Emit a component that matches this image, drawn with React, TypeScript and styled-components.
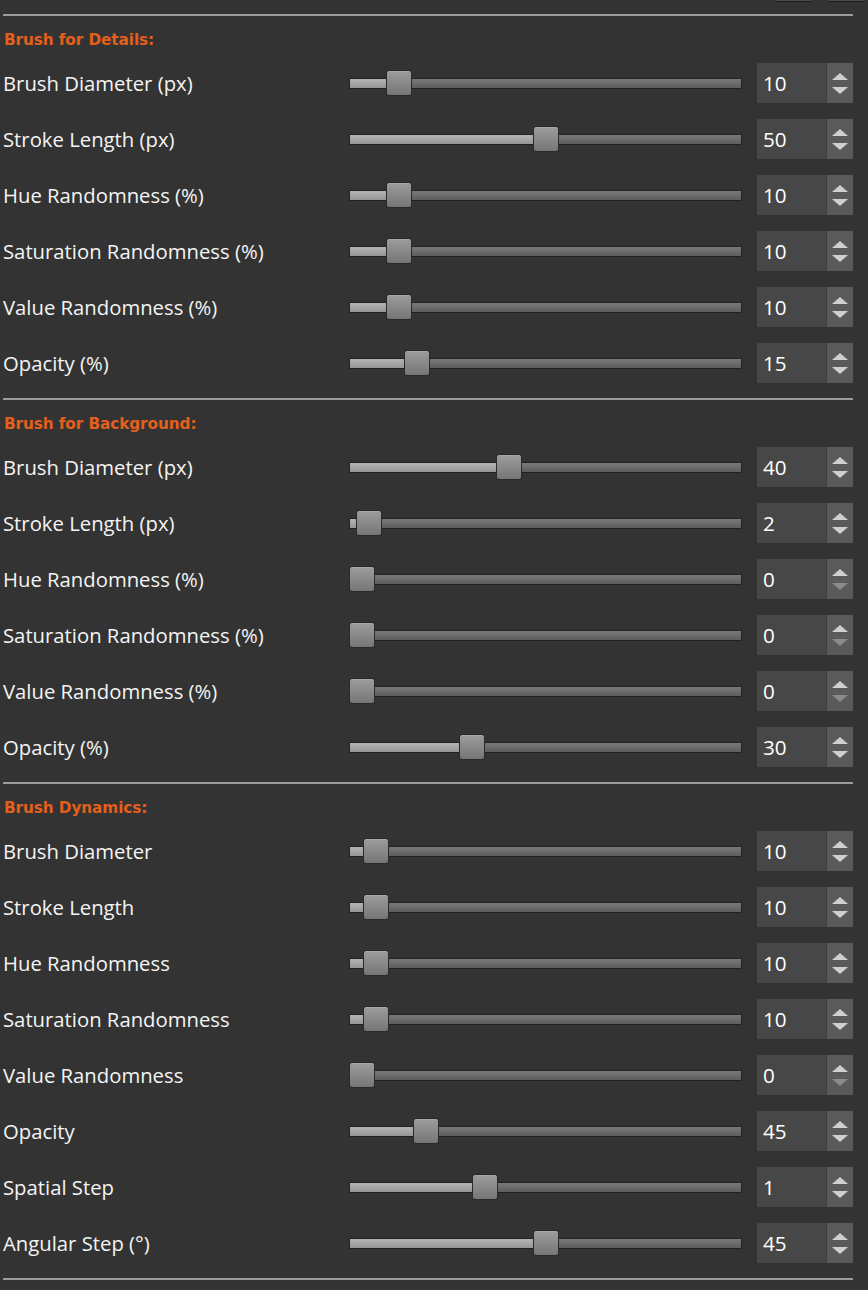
import React from "react";
import styled, { createGlobalStyle } from "styled-components";

const Global = createGlobalStyle`
  html, body { margin: 0; padding: 0; background: #333333; }
  body { width: 868px; height: 1290px; overflow: hidden; }
`;

const Page = styled.div`
  width: 868px;
  height: 1290px;
  background: #333333;
  font-family: "Open Sans", "Liberation Sans", sans-serif;
  color: #f2f2f2;
  box-sizing: border-box;
  padding-left: 3px;
`;

const TopBar = styled.div`
  height: 14px;
  display: flex;
  justify-content: flex-end;
  gap: 16px;
  padding-right: 4px;
`;

const TopButton = styled.div`
  width: 36px;
  height: 2px;
  background: #4a4a4a;
  border-bottom: 1px solid #1e1e1e;
  box-sizing: border-box;
`;

const Separator = styled.div<{ $gap?: number }>`
  width: 850px;
  height: 2px;
  margin-top: ${(p) => p.$gap ?? 0}px;
  background: #9c9c9c;
`;

const Header = styled.div`
  margin-top: 12px;
  height: 27px;
  padding-bottom: 3px;
  box-sizing: border-box;
  display: flex;
  align-items: center;
  padding-left: 1px;
  font-family: "DejaVu Sans", Verdana, sans-serif;
  font-weight: bold;
  font-size: 15.3px;
  color: #e2601c;
  letter-spacing: -0.1px;
`;

const Row = styled.div`
  height: 56px;
  display: flex;
  align-items: center;
`;

const Label = styled.div`
  width: 346px;
  font-size: 20.3px;
  white-space: nowrap;
  color: #f4f4f4;
`;

const SliderWrap = styled.div`
  position: relative;
  width: 393px;
  height: 26px;
  display: flex;
  align-items: center;
  margin-right: 15px;
`;

const Track = styled.div`
  width: 100%;
  height: 11px;
  box-sizing: border-box;
  border: 1px solid #222;
  background: linear-gradient(#7a7a7a, #5c5c5c);
  display: flex;
`;

const Filled = styled.div`
  height: 100%;
  background: linear-gradient(#b4b4b4, #959595);
`;

const Handle = styled.div`
  position: absolute;
  top: 0;
  width: 26px;
  height: 26px;
  box-sizing: border-box;
  border: 1px solid #2a2a2a;
  border-radius: 3px;
  background: linear-gradient(#9c9c9c, #767676);
  box-shadow: inset 0 1px 0 rgba(255, 255, 255, 0.12);
`;

const Spin = styled.div`
  width: 96px;
  height: 40px;
  display: flex;
`;

const SpinInput = styled.div`
  width: 69px;
  height: 100%;
  background: #474747;
  display: flex;
  align-items: center;
  padding-left: 6px;
  box-sizing: border-box;
  font-size: 20.6px;
  color: #ffffff;
`;

const SpinButtons = styled.div`
  width: 27px;
  height: 100%;
  background: #5a5a5a;
  border-left: 1px solid #3c3c3c;
  box-sizing: border-box;
  display: flex;
  flex-direction: column;
  align-items: center;
  justify-content: center;
  gap: 7px;
`;

const Arrow = styled.div<{ $down?: boolean; $disabled?: boolean }>`
  width: 0;
  height: 0;
  border-left: 8px solid transparent;
  border-right: 8px solid transparent;
  ${(p) =>
    p.$down
      ? `border-top: 7px solid ${p.$disabled ? "#8a8a8a" : "#cfcfcf"};`
      : `border-bottom: 7px solid #cfcfcf;`}
`;

type Item = { label: string; value: number; frac: number };

const TRACK_W = 393;
const HANDLE_W = 26;

function SliderRow({ label, value, frac }: Item) {
  const left = frac * (TRACK_W - HANDLE_W);
  return (
    <Row>
      <Label>{label}</Label>
      <SliderWrap>
        <Track>
          <Filled style={{ width: left + 2 }} />
        </Track>
        <Handle style={{ left }} />
      </SliderWrap>
      <Spin>
        <SpinInput>{value}</SpinInput>
        <SpinButtons>
          <Arrow />
          <Arrow $down $disabled={value === 0} />
        </SpinButtons>
      </Spin>
    </Row>
  );
}

const details: Item[] = [
  { label: "Brush Diameter (px)", value: 10, frac: 0.1 },
  { label: "Stroke Length (px)", value: 50, frac: 0.5 },
  { label: "Hue Randomness (%)", value: 10, frac: 0.1 },
  { label: "Saturation Randomness (%)", value: 10, frac: 0.1 },
  { label: "Value Randomness (%)", value: 10, frac: 0.1 },
  { label: "Opacity (%)", value: 15, frac: 0.15 },
];

const background: Item[] = [
  { label: "Brush Diameter (px)", value: 40, frac: 0.4 },
  { label: "Stroke Length (px)", value: 2, frac: 0.02 },
  { label: "Hue Randomness (%)", value: 0, frac: 0 },
  { label: "Saturation Randomness (%)", value: 0, frac: 0 },
  { label: "Value Randomness (%)", value: 0, frac: 0 },
  { label: "Opacity (%)", value: 30, frac: 0.3 },
];

const dynamics: Item[] = [
  { label: "Brush Diameter", value: 10, frac: 0.038 },
  { label: "Stroke Length", value: 10, frac: 0.038 },
  { label: "Hue Randomness", value: 10, frac: 0.038 },
  { label: "Saturation Randomness", value: 10, frac: 0.038 },
  { label: "Value Randomness", value: 0, frac: 0 },
  { label: "Opacity", value: 45, frac: 0.174 },
  { label: "Spatial Step", value: 1, frac: 0.335 },
  { label: "Angular Step (°)", value: 45, frac: 0.5 },
];

function Section({ title, items, gap }: { title: string; items: Item[]; gap: number }) {
  return (
    <>
      <Separator $gap={gap} />
      <Header>{title}</Header>
      {items.map((it) => (
        <SliderRow key={it.label} {...it} />
      ))}
    </>
  );
}

export default function App() {
  return (
    <Page>
      <Global />
      <TopBar>
        <TopButton />
        <TopButton />
      </TopBar>
      <Section title="Brush for Details:" items={details} gap={0} />
      <Section title="Brush for Background:" items={background} gap={7} />
      <Section title="Brush Dynamics:" items={dynamics} gap={7} />
      <Separator $gap={7} />
    </Page>
  );
}
